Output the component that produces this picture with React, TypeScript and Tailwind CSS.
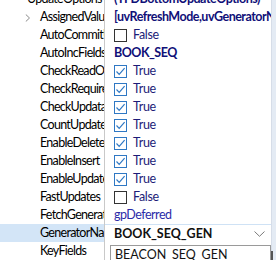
import React from "react";

type Row = {
  name: string;
  kind: "text" | "check" | "editor";
  value?: string;
  checked?: boolean;
  bold?: boolean;
  color?: string;
  arrow?: boolean;
  indent?: boolean;
};

const rows: Row[] = [
  { name: "UpdateOptions", kind: "text", value: "(TFDBottomUpdateOptions)", bold: true, indent: false },
  { name: "AssignedValues", kind: "text", value: "[uvRefreshMode,uvGeneratorName]", bold: true, arrow: true },
  { name: "AutoCommitUpdates", kind: "check", checked: false },
  { name: "AutoIncFields", kind: "text", value: "BOOK_SEQ", bold: true },
  { name: "CheckReadOnly", kind: "check", checked: true },
  { name: "CheckRequired", kind: "check", checked: true },
  { name: "CheckUpdatable", kind: "check", checked: true },
  { name: "CountUpdatedRecords", kind: "check", checked: true },
  { name: "EnableDelete", kind: "check", checked: true },
  { name: "EnableInsert", kind: "check", checked: true },
  { name: "EnableUpdate", kind: "check", checked: true },
  { name: "FastUpdates", kind: "check", checked: false },
  { name: "FetchGeneratorsPoint", kind: "text", value: "gpDeferred", color: "text-[#2b2ba8]" },
  { name: "GeneratorName", kind: "editor", value: "BOOK_SEQ_GEN" },
  { name: "KeyFields", kind: "text", value: "" },
];

function CheckBox({ checked }: { checked: boolean }) {
  return (
    <div
      className={
        "w-[13px] h-[13px] shrink-0 border bg-white flex items-center justify-center " +
        (checked ? "border-[#2f78c4]" : "border-[#333333]")
      }
    >
      {checked && (
        <svg width="11" height="11" viewBox="0 0 11 11">
          <path d="M1.5 5.5 L4.2 8.3 L9.6 2.2" fill="none" stroke="#2f78c4" strokeWidth="1.2" />
        </svg>
      )}
    </div>
  );
}

export default function App() {
  return (
    <div
      className="relative w-[276px] h-[260px] overflow-hidden bg-white flex text-[12.5px] leading-[18px]"
      style={{ fontFamily: 'Lato, "Noto Sans", sans-serif' }}
    >
      <div className="w-[271px] flex flex-col mt-[-10px]">
        {rows.map((r, i) => {
          const selected = r.kind === "editor";
          return (
            <div key={i} className="flex h-[18px] shrink-0">
              <div
                className={
                  "relative w-[104px] shrink-0 flex items-center overflow-hidden whitespace-nowrap text-[#000000] tracking-[-0.7px] " +
                  (r.indent === false ? "pl-[27px] " : "pl-[40px] ") +
                  (selected ? "bg-[#d3e5f7]" : "")
                }
              >
                {r.arrow && (
                  <svg className="absolute left-[25px] top-[6px]" width="6" height="8" viewBox="0 0 6 8">
                    <path d="M0.8 0.5 L4.5 4 L0.8 7.5" fill="none" stroke="#8a8a8a" strokeWidth="1" />
                  </svg>
                )}
                <span>{r.name}</span>
              </div>
              <div className="w-px shrink-0 bg-[#c9c9c9]" />
              <div
                className={
                  "flex-1 min-w-0 flex items-center overflow-hidden whitespace-nowrap " +
                  (selected ? "border-t border-[#cfe2f5] pl-[9px] pr-[6px]" : "pl-[9px]")
                }
              >
                {r.kind === "check" && (
                  <div className="flex items-center gap-[6px]">
                    <CheckBox checked={!!r.checked} />
                    <span className="text-[#1c1c78] tracking-[-0.3px]">{r.checked ? "True" : "False"}</span>
                  </div>
                )}
                {r.kind === "text" && (
                  <span
                    className={
                      (r.bold ? "font-bold tracking-[-0.5px] " : "tracking-[-0.5px] ") + (r.color ?? "text-[#101078]")
                    }
                  >
                    {r.value}
                  </span>
                )}
                {r.kind === "editor" && (
                  <div className="flex-1 flex items-center justify-between">
                    <span className="font-bold text-[#111111]">{r.value}</span>
                    <svg width="11" height="6" viewBox="0 0 11 6">
                      <path d="M0.5 0.5 L5.5 5.3 L10.5 0.5" fill="none" stroke="#7a7a7a" strokeWidth="1" />
                    </svg>
                  </div>
                )}
              </div>
            </div>
          );
        })}
      </div>
      <div className="w-[5px] shrink-0 bg-[#e4ebf4] border-l border-[#d6dde8]" />

      <div className="absolute left-[110px] top-[245px] w-[161px] h-[30px] bg-white border border-[#9a9a9a] flex">
        <div className="flex-1 pl-[4px] text-[#111111] whitespace-nowrap">BEACON_SEQ_GEN</div>
      </div>
      <div className="absolute left-[271px] top-[251px] w-[2px] h-[12px] bg-[#555555]" />
    </div>
  );
}
